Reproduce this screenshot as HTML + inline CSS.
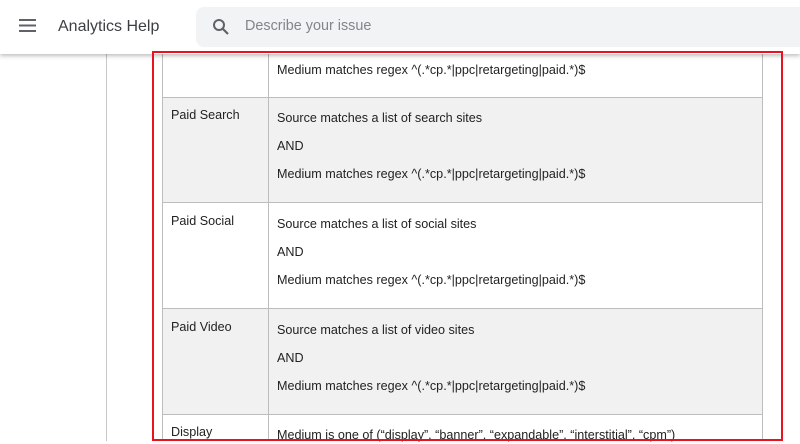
<!DOCTYPE html>
<html><head><style>
*{margin:0;padding:0;box-sizing:border-box}
body{width:800px;height:441px;overflow:hidden;background:#fff;font-family:"Liberation Sans",sans-serif;position:relative}
.hdr{position:absolute;left:0;top:0;width:800px;height:54px;background:#fff;box-shadow:0 2px 4px rgba(0,0,0,.25);z-index:5}
.t{position:absolute;font-size:12.6px;color:#222;white-space:nowrap}
.row{position:absolute;left:162px;width:601px;border-top:1px solid #bdbdbd}
.g{background:#f1f1f1}
</style></head><body>
<div class="hdr">
  <svg style="position:absolute;left:19px;top:19px" width="17" height="13"><rect y="0" width="17" height="2" fill="#5f6368"/><rect y="5.5" width="17" height="2" fill="#5f6368"/><rect y="11" width="17" height="2" fill="#5f6368"/></svg>
  <div style="position:absolute;left:58px;top:18px;font-size:16px;color:#3c4043">Analytics Help</div>
  <div style="position:absolute;left:196px;top:7px;width:604px;height:40px;background:#f1f3f4;border-radius:8px 0 0 8px">
    <svg style="position:absolute;left:16px;top:11px" width="18" height="18" viewBox="0 0 18 18"><circle cx="7" cy="7" r="5" fill="none" stroke="#5f6368" stroke-width="2"/><line x1="10.5" y1="10.5" x2="16" y2="16" stroke="#5f6368" stroke-width="2.2"/></svg>
    <div style="position:absolute;left:49px;top:11px;font-size:14.4px;color:#80868b">Describe your issue</div>
  </div>
</div>
<div style="position:absolute;left:106px;top:54px;width:1px;height:387px;background:#c8c8c8"></div>
<div class="row" style="top:54px;height:44px;border-top:none"></div>
<div class="row g" style="top:97px;height:106px"></div>
<div class="row" style="top:202px;height:107px"></div>
<div class="row g" style="top:308px;height:107px"></div>
<div class="row" style="top:414px;height:30px"></div>
<div style="position:absolute;left:162px;top:54px;width:1px;height:387px;background:#bdbdbd"></div>
<div style="position:absolute;left:268px;top:54px;width:1px;height:387px;background:#bdbdbd"></div>
<div style="position:absolute;left:762px;top:54px;width:1px;height:387px;background:#bdbdbd"></div>

<div class="t" style="left:277px;top:63px">Medium matches regex ^(.*cp.*|ppc|retargeting|paid.*)$</div>

<div class="t" style="left:171px;top:108px">Paid Search</div>
<div class="t" style="left:277px;top:111px">Source matches a list of search sites</div>
<div class="t" style="left:277px;top:139px">AND</div>
<div class="t" style="left:277px;top:167px">Medium matches regex ^(.*cp.*|ppc|retargeting|paid.*)$</div>

<div class="t" style="left:171px;top:214px">Paid Social</div>
<div class="t" style="left:277px;top:217px">Source matches a list of social sites</div>
<div class="t" style="left:277px;top:245px">AND</div>
<div class="t" style="left:277px;top:273px">Medium matches regex ^(.*cp.*|ppc|retargeting|paid.*)$</div>

<div class="t" style="left:171px;top:320px">Paid Video</div>
<div class="t" style="left:277px;top:323px">Source matches a list of video sites</div>
<div class="t" style="left:277px;top:351px">AND</div>
<div class="t" style="left:277px;top:379px">Medium matches regex ^(.*cp.*|ppc|retargeting|paid.*)$</div>

<div class="t" style="left:171px;top:425px">Display</div>
<div class="t" style="left:277px;top:428px">Medium is one of (“display”, “banner”, “expandable”, “interstitial”, “cpm”)</div>

<div style="position:absolute;left:152px;top:51px;width:631px;height:390px;border:2px solid #e8131f;z-index:6"></div>
</body></html>
